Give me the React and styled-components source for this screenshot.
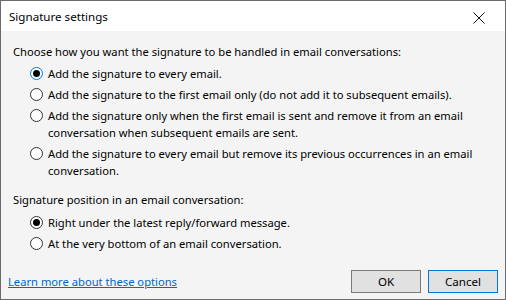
import React from "react";
import styled, { createGlobalStyle } from "styled-components";

const Global = createGlobalStyle`
  html, body {
    margin: 0;
    padding: 0;
    background: #ffffff;
  }
  * {
    box-sizing: border-box;
  }
`;

const firstGroup = [
  { text: "Add the signature to every email.", checked: true, focused: true },
  { text: "Add the signature to the first email only (do not add it to subsequent emails)." },
  {
    text:
      "Add the signature only when the first email is sent and remove it from an email conversation when subsequent emails are sent.",
  },
  {
    text:
      "Add the signature to every email but remove its previous occurrences in an email conversation.",
  },
];

const secondGroup = [
  { text: "Right under the latest reply/forward message.", checked: true },
  { text: "At the very bottom of an email conversation." },
];

function Option({ text, checked, focused }) {
  return (
    <OptionRow>
      <Radio $checked={checked} $focused={focused} />
      <OptionText>{text}</OptionText>
    </OptionRow>
  );
}

export default function App() {
  return (
    <>
      <Global />
      <Window>
        <TitleBar>
          <Title>Signature settings</Title>
          <CloseButton>
            <svg width="12" height="12" viewBox="0 0 12 12">
              <path d="M0.5 0.5 L11.5 11.5 M11.5 0.5 L0.5 11.5" stroke="#111" strokeWidth="1" fill="none" />
            </svg>
          </CloseButton>
        </TitleBar>
        <Body>
          <SectionLabel>Choose how you want the signature to be handled in email conversations:</SectionLabel>
          <OptionList>
            {firstGroup.map((o, i) => (
              <Option key={i} {...o} />
            ))}
          </OptionList>
          <SectionLabel $spaced>Signature position in an email conversation:</SectionLabel>
          <OptionList $second>
            {secondGroup.map((o, i) => (
              <Option key={i} {...o} />
            ))}
          </OptionList>
          <Footer>
            <Link>Learn more about these options</Link>
            <Buttons>
              <Button>OK</Button>
              <Button $default>Cancel</Button>
            </Buttons>
          </Footer>
        </Body>
      </Window>
    </>
  );
}

/* Styled Components */
const Window = styled.div`
  width: 506px;
  height: 300px;
  border: 1px solid #6b6b6b;
  display: flex;
  flex-direction: column;
  font-family: "Noto Sans", "Open Sans", sans-serif;
  font-size: 11.2px;
  color: #000;
  overflow: hidden;
`;

const TitleBar = styled.div`
  height: 30px;
  flex-shrink: 0;
  background: #ffffff;
  display: flex;
  align-items: center;
  justify-content: space-between;
  padding-left: 8px;
`;

const Title = styled.div`
  line-height: 17px;
  font-size: 11.6px;
`;

const CloseButton = styled.div`
  width: 46px;
  height: 30px;
  display: flex;
  align-items: center;
  justify-content: center;
  margin-right: 3px;
  margin-top: 3px;
`;

const Body = styled.div`
  flex: 1;
  background: #f4f4f4;
  display: flex;
  flex-direction: column;
  padding: 12px 7px 6px 12px;
`;

const SectionLabel = styled.div`
  line-height: 17px;
  margin-top: ${(p) => (p.$spaced ? "12px" : "0")};
`;

const OptionList = styled.div`
  display: flex;
  flex-direction: column;
  gap: 4px;
  margin-top: ${(p) => (p.$second ? "6px" : "5px")};
  padding-left: 17px;
  padding-right: 18px;
`;

const OptionRow = styled.div`
  display: flex;
  align-items: flex-start;
  gap: 5px;
`;

const Radio = styled.span`
  flex-shrink: 0;
  width: 13px;
  height: 13px;
  margin-top: 2px;
  border-radius: 50%;
  border: 1px solid ${(p) => (p.$focused ? "#0078d7" : "#333333")};
  background: #ffffff;
  display: flex;
  align-items: center;
  justify-content: center;

  &::after {
    content: "";
    width: 7px;
    height: 7px;
    border-radius: 50%;
    background: #000;
    display: ${(p) => (p.$checked ? "block" : "none")};
  }
`;

const OptionText = styled.span`
  line-height: 17px;
`;

const Footer = styled.div`
  margin-top: auto;
  display: flex;
  align-items: center;
  justify-content: space-between;
  margin-left: -5px;
`;

const Link = styled.a`
  color: #0066cc;
  text-decoration: underline;
  line-height: 17px;
  cursor: pointer;
`;

const Buttons = styled.div`
  display: flex;
  gap: 7px;
`;

const Button = styled.button`
  width: 70px;
  height: 23px;
  font: inherit;
  font-size: 11.6px;
  color: #000;
  background: #e1e1e1;
  border: 1px solid ${(p) => (p.$default ? "#0078d7" : "#7a7a7a")};
  padding: 0;
`;
